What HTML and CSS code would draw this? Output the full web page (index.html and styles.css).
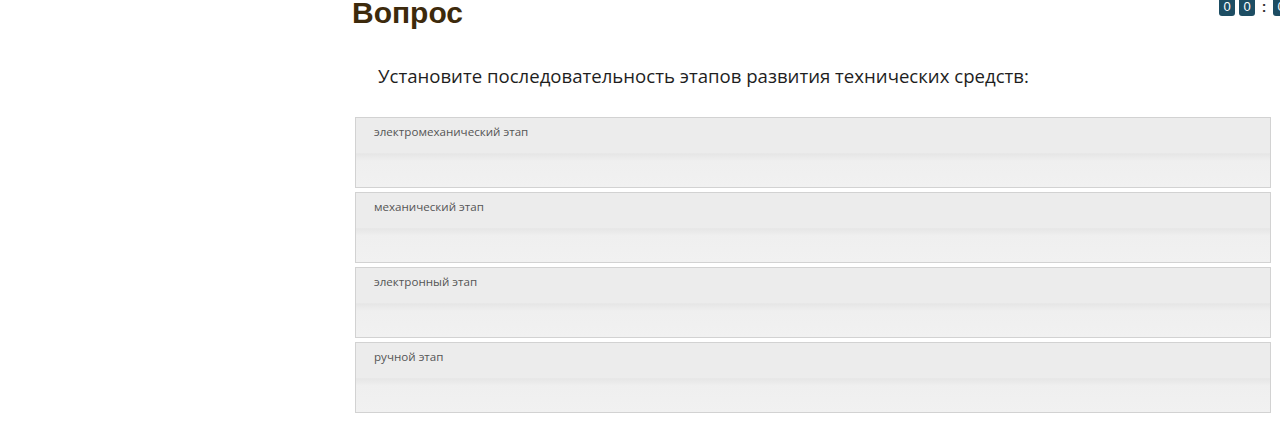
FILE: index.html
```html
<!DOCTYPE html>
<html lang="ru">
<head>
<meta charset="utf-8">
<link rel="stylesheet" href="styles.css">
</head>
<body>
<div class="timer">
  <span class="digit">0</span><span class="digit">0</span><span class="colon">:</span><span class="digit">0</span>
</div>
<main class="page">
  <h1 class="title">Вопрос</h1>
  <p class="question">Установите последовательность этапов развития технических средств:</p>
  <ul class="items">
    <li class="item"><span class="item-text">электромеханический этап</span></li>
    <li class="item"><span class="item-text">механический этап</span></li>
    <li class="item"><span class="item-text">электронный этап</span></li>
    <li class="item"><span class="item-text">ручной этап</span></li>
  </ul>
</main>
</body>
</html>
```
FILE: styles.css
```css
html, body {
  margin: 0;
  padding: 0;
  background: #fff;
  overflow: hidden;
}
body {
  width: 1280px;
  height: 426px;
  position: relative;
}
.page {
  margin-left: 352px;
  width: 919px;
  display: flex;
  flex-direction: column;
}
.title {
  margin: -2px 0 0 0;
  font-family: "Liberation Sans", Arial, sans-serif;
  font-weight: bold;
  font-size: 30px;
  line-height: 30px;
  color: #3d2a0c;
}
.question {
  margin: 35px 0 0 26px;
  font-family: "Open Sans", sans-serif;
  font-size: 18.6px;
  line-height: 26px;
  color: #1e1e1e;
}
.items {
  list-style: none;
  margin: 28px 0 0 3px;
  padding: 0;
  display: flex;
  flex-direction: column;
  gap: 4px;
}
.item {
  border: 1px solid #d2d2d2;
  background: linear-gradient(to bottom, #ececec 0, #ececec 50%, #e6e6e6 52%, #efefef 62%, #f1f1f1 100%);
  box-sizing: border-box;
  height: 71px;
  padding: 4px 18px 0;
}
.item-text {
  font-family: "Open Sans", sans-serif;
  font-size: 11.6px;
  line-height: 16px;
  color: #555;
}
.timer {
  position: absolute;
  top: 0;
  left: 1219px;
  display: flex;
  align-items: flex-start;
  gap: 4px;
}
.digit {
  width: 16px;
  height: 16px;
  background: #1d4d63;
  color: #fff;
  border-radius: 0 0 3px 3px;
  font-family: "Liberation Sans", Arial, sans-serif;
  font-size: 13px;
  line-height: 14px;
  text-align: center;
}
.colon {
  width: 10px;
  font-family: "Liberation Sans", Arial, sans-serif;
  font-weight: bold;
  font-size: 14px;
  line-height: 14px;
  color: #333;
  text-align: center;
}
```
